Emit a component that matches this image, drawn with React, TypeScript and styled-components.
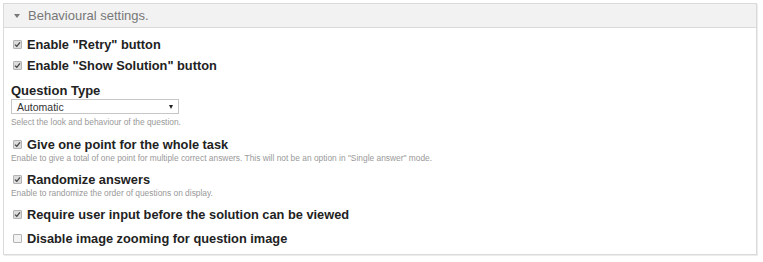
import React from "react";
import styled, { createGlobalStyle } from "styled-components";

const GlobalStyle = createGlobalStyle`
  html, body {
    margin: 0;
    padding: 0;
    background: #fff;
  }
  body {
    font-family: "Liberation Sans", Arial, sans-serif;
    color: #222;
  }
`;

const Page = styled.div`
  padding: 3px 6px 7px 3px;
`;

const Panel = styled.div`
  border: 1px solid #dadada;
  box-shadow: 1px 1px 0 #ececec;
  background: #fff;
`;

const PanelHeader = styled.div`
  display: flex;
  align-items: center;
  gap: 8px;
  height: 23px;
  padding-left: 10px;
  background: #f2f2f2;
  border-bottom: 1px solid #dadada;
  color: #777;
  font-size: 13px;
`;

const Caret = styled.span`
  width: 0;
  height: 0;
  margin-top: 1px;
  border-left: 3.5px solid transparent;
  border-right: 3.5px solid transparent;
  border-top: 4px solid #777;
`;

const PanelBody = styled.div`
  display: flex;
  flex-direction: column;
  padding: 8px 4px 8px 7px;
`;

const Field = styled.div<{ gap?: number }>`
  display: flex;
  flex-direction: column;
  margin-bottom: ${(p) => p.gap ?? 5}px;
`;

const CheckRow = styled.label`
  display: flex;
  align-items: center;
  height: 16px;
  font-weight: bold;
  font-size: 12.8px;
  color: #222;
`;

const Box = styled.span<{ checked?: boolean }>`
  display: inline-flex;
  align-items: center;
  justify-content: center;
  width: 9px;
  height: 9px;
  box-sizing: border-box;
  border: 1px solid #b3b3b3;
  border-radius: 1px;
  background: ${(p) => (p.checked ? "#dcdcdc" : "#f3f3f3")};
  margin: 1px 5px 0 2px;
`;

const FieldLabel = styled.div`
  font-weight: bold;
  font-size: 13px;
  color: #222;
  height: 16px;
  line-height: 16px;
`;

const Select = styled.div`
  display: flex;
  align-items: center;
  justify-content: space-between;
  box-sizing: border-box;
  width: 168px;
  height: 15px;
  padding: 0 5px 0 5px;
  border: 1px solid #c6c6c6;
  font-size: 10.5px;
  color: #333;
`;

const Arrow = styled.span`
  width: 0;
  height: 0;
  border-left: 2.5px solid transparent;
  border-right: 2.5px solid transparent;
  border-top: 4px solid #222;
`;

const Description = styled.div<{ top?: number }>`
  font-size: 8.4px;
  line-height: 10px;
  height: 10px;
  color: #999;
  margin-top: ${(p) => p.top ?? 1}px;
`;

const Check = () => (
  <svg width="7" height="7" viewBox="0 0 7 7">
    <path d="M1 3.6 L2.8 5.3 L6 1.4" fill="none" stroke="#444" strokeWidth="1.3" />
  </svg>
);

const CheckField = ({ label, checked }: { label: string; checked?: boolean }) => (
  <CheckRow>
    <Box checked={checked}>{checked && <Check />}</Box>
    {label}
  </CheckRow>
);

const App = () => {
  return (
    <Page>
      <GlobalStyle />
      <Panel>
        <PanelHeader>
          <Caret />
          Behavioural settings.
        </PanelHeader>
        <PanelBody>
          <Field gap={5}>
            <CheckField checked label={'Enable "Retry" button'} />
          </Field>
          <Field gap={10}>
            <CheckField checked label={'Enable "Show Solution" button'} />
          </Field>
          <Field gap={9}>
            <FieldLabel>Question Type</FieldLabel>
            <Select>
              Automatic
              <Arrow />
            </Select>
            <Description top={3}>Select the look and behaviour of the question.</Description>
          </Field>
          <Field gap={8}>
            <CheckField checked label="Give one point for the whole task" />
            <Description>
              Enable to give a total of one point for multiple correct answers. This will not be an option in "Single answer" mode.
            </Description>
          </Field>
          <Field gap={8}>
            <CheckField checked label="Randomize answers" />
            <Description>Enable to randomize the order of questions on display.</Description>
          </Field>
          <Field gap={8}>
            <CheckField checked label="Require user input before the solution can be viewed" />
          </Field>
          <Field gap={0}>
            <CheckField label="Disable image zooming for question image" />
          </Field>
        </PanelBody>
      </Panel>
    </Page>
  );
};

export default App;
